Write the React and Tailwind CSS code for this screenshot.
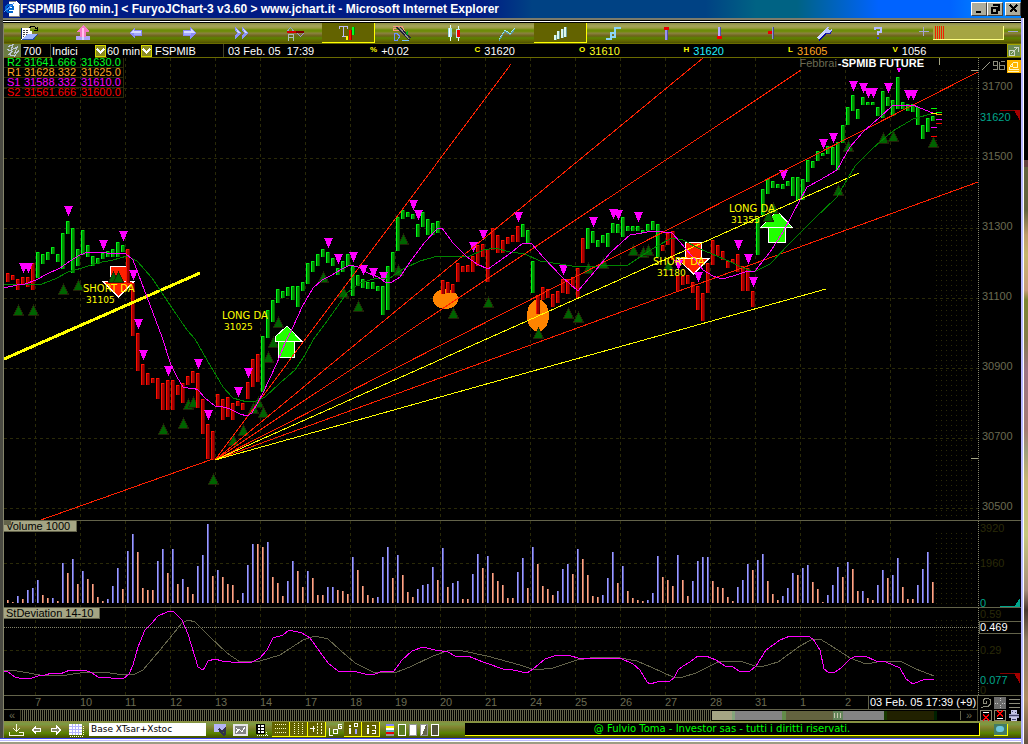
import React from "react";

/* ---------- market data: top-bottom and colour (g/r) in chart pixels, one bar each 5px ---------- */
const PRICE_BARS = `273-282r 275-280r 279-290r 277-284r 277-287r 263-290r 252-278g 254-264g 252-260g 247-254g 254-262g 233-269g 221-234g 228-273g 249-266g 230-255g 245-257g 256-266g 258-264g 253-259g 251-257g 249-257g 242-257g 245-252g
249-283r 283-336r 333-371r 364-385r 373-385r 378-383r 378-399r 383-410r 380-410r 380-410r 385-395r 383-403r 376-385r 371-383r 373-408r 399-434r 424-459r 431-460r 394-406r 399-420r 397-417r 403-420r 401-406r 403-410r 382-399r 359-387r 354-382r
336-392g 310-338g 300-322g 289-303g 291-298g 287-296g 286-300g 286-307g 282-291g 263-284g 261-272g 254-266g 249-257g 252-263g 258-266g 268-275g 261-272g 254-266g 266-296g 275-286g 279-288g 282-289g 282-289g 286-291g 286-315g 266-310g 252-272g 217-251g 210-219g 212-217g 214-219g 224-237g 212-227g 219-235g 223-235g 221-233g
280-294r 282-293r 284-293r 263-282r 266-272r 265-272r 256-272r 245-266r 244-257r 249-282r 228-250r 235-253r 240-253r 237-244r 235-242r 226-242r 224-237g 230-244g 261-293g 295-314r 287-300r 289-298r 294-307r 291-303r 279-293r 279-294r 277-287r 268-298r 238-263r
228-249g 231-243g 240-247g 235-243g 233-247g 223-233g 224-233g 217-237g 226-231g 226-231g 226-231g 230-233g 224-231g 221-230g 224-257g 245-251r 233-245r 231-260r 275-291r 276-285r 275-284r 282-293r 286-310r 293-321r 263-293r 240-265r 245-256r 251-260r 261-268r 259-263r 254-272r 266-291r 268-291r 291-307r
218-255g 189-215g 179-194g 181-188g 184-188g 184-189g 181-186g 177-196g 177-200g 179-200g 160-182g 161-168g 151-161g 153-156g 146-154g 147-165g 142-170g 125-143g 107-125g 95-111g 109-119g 97-105g 102-105g 102-105g 107-116g 91-118g 97-106g 100-116g 77-109g 102-109g 104-111g 104-112g 107-125g 125-139g 118-132g 116-121g`
  .split(/\s+/)
  .map((s) => {
    const [top, rest] = s.split("-");
    return { top: Number(top), bottom: parseInt(rest, 10), up: rest.endsWith("g") };
  });

const VOLUME_BARS = `3s 1s 7b 4s 13b 15b 23b 8s 5s 5b 2s 40b 30s 44b 19s 32b 24s 19s 6s 2s 4b 17b 35b 14s 52b 69b 51s 15s 13s 13s 42b 54b 30s 54b 19s 24b 16s 9s 37b 48b 79b 27s 33b 26s 19s 18s 3s 10b 38b 59b 59s 56s 61b 26s 20s 7s 22b 42b 32s 16s 32b 25s 8s 8s 16b 16b 13s
12s 9s 46b 33s 17s 8s 5s 6b 46b 56b 25s 48b 28s 11s 6s 14b 18b 19b 36b 23s 55b 16s 20b 22b 4s 4s 29b 49b 35s 47b 30s 22s 18s 5s 5s 31b 45b 15s 56b 39s 17s 14s 8s 12b 34b 39b 29s 54b 44s 28s 7s 6s 8b 25b 51b 20s 37b 12s 5s 3s 2s 3b 10b 47b 26s 23s 17s 48b 23s
7s 22b 42b 46b 46b 22s 16s 15s 6s 2s 16b 23b 39b 33s 43b 49b 22s 9s 3s 7b 15b 30b 28s 35b 38b 21s 14s 1s 8b 18b 36b 26s 41b 34s 12s 12b 5s 3s 18b 33b 25s 28b 45b 16s 4s 4s 18b 34b 51b 21s`
  .split(/\s+/)
  .map((s) => ({ h: parseInt(s, 10), blue: s.endsWith("b") }));

const FAST_MA =
  "4,288 17,285 25,284 36,280 47,274 60,268 70,261 80,255 88,252 107,253 125,253 133,260 147,297 153,313 162,337 171,365 177,377 183,387 188,388 193,388 198,390 205,398 215,406 220,406 230,409 240,414 247,416 252,413 263,393 277,363 285,343 293,327 302,307 313,288 322,280 330,276 342,269 350,265 358,267 368,273 378,277 385,282 392,282 400,277 410,262 425,242 437,229 442,228 453,243 467,257 477,264 488,269 498,262 512,252 523,243 532,244 543,257 562,277 578,291 590,277 610,253 622,242 630,235 642,233 653,231 672,233 680,242 697,262 703,270 713,276 722,279 733,276 748,271 755,271 770,252 783,232 800,200 807,187 820,180 837,170 850,147 863,132 880,117 892,106 913,105 925,110 933,113";
const SLOW_MA =
  "4,284 42,284 55,279 68,272 82,268 97,263 113,260 127,256 137,261 152,278 170,305 187,330 195,339 207,360 223,387 233,398 247,402 256,401 265,397 280,383 295,370 305,355 313,340 330,317 347,293 360,283 377,278 390,278 403,269 420,261 438,256 453,257 470,256 483,250 495,248 510,252 525,254 540,261 560,264 578,267 600,266 628,265 643,255 657,246 672,238 683,240 700,249 717,256 733,263 743,268 754,272 770,264 790,243 813,220 837,197 855,166 873,148 893,131 913,119 927,115 940,112";

/* Deviation curves are stored at three times the screen resolution, in blocks with their own origin. */
const curve = (blocks) =>
  blocks
    .flatMap(([ox, text]) =>
      text.split(" ").map((p) => {
        const [x, y] = p.split(",").map(Number);
        return `${ox + Math.round(x / 3)},${510 + Math.round(y / 3)}`;
      })
    )
    .join(" ");

const DEVIATION = curve([
  [0, "12,484 25,487 45,500 70,506 95,505 115,499 135,496 155,490 180,492 210,479 255,479 275,488 295,502 370,506 388,493 400,465 415,410 435,360 455,340 475,318 500,305 520,304 545,330 565,372 585,440 595,470 608,479 615,470 625,453 645,448 665,453 720,458 755,456 780,443 800,420 820,384 850,375 868,361 905,369 930,385 960,425 985,460 1015,482"],
  [340, "0,484 50,487 75,493 105,491 130,482 163,483 185,450 215,424 250,411 285,420 325,425 345,438 385,437 430,455 490,477 520,480 560,490 580,477 615,448 650,436 680,436 725,447 745,443 770,448 810,443 840,444 880,462 900,480 920,515 930,521 950,515 990,513 1003,505 1015,480"],
  [683, "0,468 20,455 45,437 70,437 100,450 125,467 150,472 168,484 200,484 220,468 250,420 290,390 320,377 375,379 390,388 410,420 423,478 435,485 455,485 475,475 500,448 520,439 545,439 580,453 610,457 650,475 670,508 690,522 710,513 730,508 752,508"],
]);
const DEVIATION_AVG = curve([
  [0, "12,479 50,484 120,494 180,499 240,489 310,487 350,493 400,496 430,480 480,420 545,338 565,331 585,335 630,380 680,430 720,456 780,454 840,435 910,390 945,378 985,387"],
  [340, "0,419 45,458 100,485 130,488 170,486 210,472 280,438 330,421 370,424 440,439 540,466 585,479 640,474 710,449 770,442 840,444 890,452 940,475 1000,500"],
  [683, "0,502 40,488 100,460 120,454 170,454 215,467 235,470 285,455 350,407 385,389 410,388 440,405 500,443 550,461 600,452 650,452 700,478 752,497"],
]);

const pairs = (s) => s.split(" ").map((p) => p.split(",").map(Number));
const DOWN_MARKS = pairs(
  "23,263 28,263 68,206 103,240 123,231 133,270 138,319 143,350 168,366 198,359 208,410 238,387 248,368 328,238 338,254 353,252 363,265 373,268 383,272 413,200 418,210 473,242 483,230 518,212 563,265 593,217 613,209 618,210 638,212 678,260 698,272 738,240 748,254 753,277 783,170 823,139 833,133 853,81 863,83 868,88 873,88 888,83 908,90 913,90"
);
const UP_MARKS = pairs(
  "18,305 33,305 63,284 78,280 113,272 118,272 163,424 183,418 188,399 193,397 213,474 233,435 243,425 253,403 258,397 263,407 268,352 273,337 278,317 323,272 343,287 358,301 398,265 403,234 453,308 488,297 538,328 568,308 578,312 588,263 603,258 633,245 643,247 648,245 668,260 838,185 848,141 883,133 893,131 933,137"
);
const FRONT_UP_MARKS = [[113, 272], [118, 272], [768, 211], [773, 203]];
const FAN = [
  [4, 533, 213, 459],
  [215, 460, 511, 64],
  [215, 460, 703, 58],
  [215, 460, 801, 70],
  [215, 460, 978, 72],
  [215, 460, 978, 182],
];
const SIGNALS = [
  [83, 292, "SHORT DA", 86, 303, "31105"],
  [222, 319, "LONG DA", 224, 330, "31025"],
  [653, 265, "SHORT DA", 657, 276, "31180"],
  [729, 212, "LONG DA", 731, 223, "31355"],
];
const GRID_X = Array.from({ length: 20 }, (_, i) => 35 + i * 45);
const FUTURE_X = Array.from({ length: 8 }, (_, i) => 936 + i * 5);
const TICKS = [
  [931, 108, "#00ff00"], [936, 112, "#00ff00"], [931, 113, "#ffff00"], [936, 114, "#ff9c00"],
  [936, 119, "#ff00ff"], [936, 123, "#ff0000"], [931, 127, "#ff00ff"], [931, 136, "#ff0000"],
];

function Grid({ top, bottom, rows }) {
  return (
    <g stroke="#2a2a08" strokeDasharray="3 3">
      {GRID_X.map((x) => (
        <line key={x} x1={x + 0.5} x2={x + 0.5} y1={top} y2={bottom} />
      ))}
      {rows.map((y) => (
        <line key={y} x1="4" x2="978" y1={y + 0.5} y2={y + 0.5} />
      ))}
      <g strokeDasharray="1 4">
        {FUTURE_X.map((x) => (
          <line key={x} x1={x + 0.5} x2={x + 0.5} y1={top + 12} y2={bottom} />
        ))}
      </g>
    </g>
  );
}

function AxisRule({ top, bottom }) {
  return <line x1="978.5" x2="978.5" y1={top} y2={bottom} stroke="#84846b" strokeDasharray="1 1" />;
}

function UpMark({ x, y }) {
  return <path d={`M${x + 0.5} ${y}L${x + 5.5} ${y + 10.5}H${x - 4.5}Z`} />;
}

function PricePanel() {
  return (
    <section className="relative flex border-b border-[#63634a]" aria-label="Price chart">
      <svg className="h-[462px] min-w-0 flex-1" viewBox="4 58 974 462" preserveAspectRatio="none" shapeRendering="crispEdges">
        <Grid top={58} bottom={520} rows={[88, 158, 228, 298, 368, 438, 508]} />
        <ellipse cx="445.5" cy="299" rx="12.5" ry="10" fill="#ff8400" />
        <ellipse cx="538" cy="315.5" rx="11" ry="16" fill="#ff8400" />
        <g fill="#006300" stroke="#212108">
          {UP_MARKS.map(([x, y]) => (
            <UpMark key={x} x={x} y={y} />
          ))}
        </g>
        <g stroke="#fff" fill="#ff2100">
          <path d="M110.500 266H126V281H134.500L118.500 297L102.500 281H110.500Z" />
          <path d="M102.500 281.500H134.500" />
          <path d="M685.500 242.500H701.500V258.500H709L693.500 274L677.500 258.500H685.500Z" />
          <path d="M677.500 258.500H709" />
        </g>
        <g stroke="#fff" fill="#21ff00">
          <path d="M287 326L302 341.500H294.500V357.500H278.500V341.500H275V337Z" />
          <path d="M275 341.500H302" />
          <path d="M777 211L792.500 227.500H785V242.500H768.500V227.500H760.500Z" />
          <path d="M760.500 227.500H792.500" />
        </g>
        {PRICE_BARS.map((b, i) => (
          <g key={i}>
            <rect x={6 + i * 5} y={b.top} width="4" height={b.bottom - b.top} fill={b.up ? "#009400" : "#a50000"} />
            <rect x={6 + i * 5} y={b.top} width="1" height={b.bottom - b.top} fill={b.up ? "#00ff21" : "#ff1000"} />
            <rect x={6 + i * 5} y={b.top} width="3" height="1" fill={b.up ? "#00e710" : "#ff1000"} />
            <rect x={9 + i * 5} y={b.top} width="1" height={b.bottom - b.top} fill={b.up ? "#006300" : "#6b0000"} />
          </g>
        ))}
        <g fill="#006300" stroke="#212108">
          {FRONT_UP_MARKS.map(([x, y]) => (
            <UpMark key={x} x={x} y={y} />
          ))}
        </g>
        <g fill="#ff00ff">
          {DOWN_MARKS.map(([x, y]) => (
            <path key={x} d={`M${x - 4} ${y}H${x + 5}L${x + 0.5} ${y + 10}Z`} />
          ))}
          <rect x="897" y="68" width="4" height="2" />
          <rect x="898" y="70" width="2" height="2" />
        </g>
        <g stroke="#ff2100">
          {FAN.map(([a, b, c, d], i) => (
            <line key={i} x1={a} y1={b} x2={c} y2={d} />
          ))}
        </g>
        <g stroke="#ffff00">
          <line x1="215" y1="460" x2="859" y2="173" />
          <line x1="215" y1="460" x2="826" y2="289" />
          <line x1="4" y1="359" x2="200" y2="273" strokeWidth="3" />
        </g>
        <polyline points={SLOW_MA} fill="none" stroke="#008400" />
        <polyline points={FAST_MA} fill="none" stroke="#ff00ff" />
        {TICKS.map(([x, y, c]) => (
          <rect key={y} x={x} y={y} width="6" height="1" fill={c} />
        ))}
        <g fill="#ffff00" fontFamily="DejaVu Sans, sans-serif" fontSize="10">
          {SIGNALS.map(([x1, y1, a, x2, y2, b]) => (
            <React.Fragment key={b}>
              <text x={x1} y={y1}>{a}</text>
              <text x={x2} y={y2} fontSize="9">{b}</text>
            </React.Fragment>
          ))}
        </g>
        <path d="M939.500 58V65M971 70.500H978M971 458.500H978" stroke="#a5a584" />
      </svg>
      <svg className="h-[462px] w-[43px] shrink-0" viewBox="978 58 43 462" shapeRendering="crispEdges">
        <AxisRule top={58} bottom={520} />
        <g fill="#6b6b52" fontFamily="Liberation Sans, sans-serif" fontSize="11">
          {[31700, 31500, 31300, 31100, 30900, 30700, 30500].map((v, i) => (
            <text key={v} x="982" y={90 + i * 70}>{v}</text>
          ))}
          <text x="980" y="121" fill="#00a58c">31620</text>
        </g>
        <path d="M1000 110.500H1016" stroke="#840000" />
        <path d="M1014 110H1020V121Z" fill="#a50000" />
        <path d="M982 70L990 62" stroke="#9c9c8c" />
        <path d="M993.500 61.500H997.500V65.500H993.500ZM1000.500 61.500H1004.500M999.500 62V69.500H1004.500V65.500H1000M997.500 65V69.500H993M1003 70L1005 68" stroke="#8c8c7b" fill="none" />
        <rect x="1007" y="60" width="14" height="13" fill="#ffb500" />
        <path d="M1009.500 66.500V69.500H1018.500M1009.500 66.500L1012.500 63.500V66.500H1009.500M1013 62.500H1017.500V67.500H1013M1008 71.500H1019" stroke="#fff7c6" fill="none" />
      </svg>
      <table className="absolute left-0 top-0 w-[120px] border-collapse text-[11px] leading-[9px]">
        <tbody>
          {[
            ["R2", "31641.666", "31630.0", "text-[#00ff21]"],
            ["R1", "31628.332", "31625.0", "text-[#ffa521]"],
            ["S1", "31588.332", "31610.0", "text-[#ff00ff]"],
            ["S2", "31561.666", "31600.0", "text-[#ff0000]"],
          ].map(([n, a, b, c]) => (
            <tr key={n} className={c}>
              <th scope="row" className="w-5 border-b border-[#2a2a08] p-0 pl-[3px] text-left font-normal">{n}</th>
              <td className="w-[57px] border-b border-[#2a2a08] p-0">{a}</td>
              <td className="border-b border-r border-[#2a2a08] p-0">{b}</td>
            </tr>
          ))}
        </tbody>
      </table>
      <h1 className="absolute right-[97px] top-0 flex text-[11px] font-bold leading-[11px] text-white">
        <span className="mr-px font-normal text-[#6b6b52]">Febbrai</span>
        <span>-SPMIB FUTURE</span>
      </h1>
    </section>
  );
}

function PanelLabel({ children }) {
  return (
    <h2 className="absolute left-0 top-0 border-b border-r border-[#63634a] bg-[#a5a584] px-[2px] pr-[6px] text-[11px] leading-[10px] text-black">
      {children}
    </h2>
  );
}

function VolumePanel() {
  return (
    <section className="relative flex border-b border-[#63634a]" aria-label="Volume chart">
      <svg className="h-[86px] min-w-0 flex-1" viewBox="4 521 974 86" preserveAspectRatio="none" shapeRendering="crispEdges">
        <Grid top={521} bottom={607} rows={[563]} />
        {VOLUME_BARS.map((b, i) => (
          <g key={i}>
            <rect x={7 + i * 5} y={603 - b.h} width="1" height={b.h} fill={b.blue ? "#9c9cff" : "#ffa584"} />
            <rect x={8 + i * 5} y={603 - b.h} width="1" height={b.h} fill={b.blue ? "#5a5ab5" : "#a56352"} />
          </g>
        ))}
      </svg>
      <svg className="h-[86px] w-[43px] shrink-0" viewBox="978 521 43 86" shapeRendering="crispEdges">
        <AxisRule top={521} bottom={607} />
        <g fill="#2a2a08" fontFamily="Liberation Sans, sans-serif" fontSize="11">
          <text x="980" y="532">3920</text>
          <text x="980" y="567">1960</text>
          <text x="980" y="607" fill="#00a58c">0</text>
        </g>
        <path d="M1000 606.500H1016" stroke="#00a58c" />
        <path d="M1020 598V607H1014Z" fill="#00a58c" />
      </svg>
      <PanelLabel>Volume 1000</PanelLabel>
      <span className="absolute left-0 top-0 h-[4px] w-[7px] bg-[#63634a]" />
    </section>
  );
}

function DeviationPanel() {
  return (
    <section className="relative flex border-b border-[#63634a]" aria-label="Standard deviation chart">
      <svg className="h-[87px] min-w-0 flex-1" viewBox="4 608 974 87" preserveAspectRatio="none" shapeRendering="crispEdges">
        <Grid top={608} bottom={695} rows={[650]} />
        <line x1="4" x2="978" y1="627.500" y2="627.500" stroke="#84846b" strokeDasharray="1 1" />
        <polyline points={DEVIATION_AVG} fill="none" stroke="#63634a" />
        <polyline points={DEVIATION} fill="none" stroke="#ff00ff" />
      </svg>
      <svg className="h-[87px] w-[43px] shrink-0" viewBox="978 608 43 87" shapeRendering="crispEdges">
        <AxisRule top={608} bottom={695} />
        <g fill="#2a2a08" fontFamily="Liberation Sans, sans-serif" fontSize="11">
          <text x="980" y="618">0.59</text>
          <text x="980" y="654">0.29</text>
          <text x="980" y="694">0</text>
          <rect x="979" y="621" width="43" height="12" fill="#000" stroke="#63634a" />
          <text x="980" y="631" fill="#fff">0.469</text>
          <text x="980" y="684" fill="#00a58c">0.077</text>
        </g>
        <path d="M1000 673.500H1016" stroke="#840000" />
        <path d="M1014 673H1020V684Z" fill="#a50000" />
      </svg>
      <PanelLabel>StDeviation 14-10</PanelLabel>
    </section>
  );
}

function Glyph({ children, className = "h-4 w-5", box = "0 0 20 16" }) {
  return (
    <svg className={className} viewBox={box} fill="none" shapeRendering="crispEdges" aria-hidden="true">
      {children}
    </svg>
  );
}

const TOOLS = [
  ["Open chart", <g key="i">
    <path d="M1 3H10V6H12V15H1Z" fill="#fff" />
    <path d="M1.500 14V3" stroke="#00216b" />
    <path d="M3 5.500H5M6 5.500H8M3 7.500H5M6 7.500H8M3 9.500H5M6 9.500H8M3 11.500H4" stroke="#42424a" />
    <path d="M2 15L7 9H18L13 15Z" fill="#9cb5ff" />
    <path d="M2 14.500H13M13 14.500L18 9" stroke="#214aa5" />
    <path d="M9.500 2.500L11.500 1.500H14.500L16.500 4M17.500 2V5.500H14" stroke="#000" />
  </g>],
  ["Up", <g key="i">
    <path d="M3 11H17V15H3Z" fill="#ada5f7" />
    <path d="M10 0L16 6V7H13V12H7V7H4V6Z" fill="#f77bc6" />
    <path d="M9 3H11V12H9Z" fill="#ffc6ef" />
    <path d="M9 12H11V15H9Z" fill="#d6d6ff" />
  </g>],
  ["Back", <g key="i"><path d="M3 8L9 2V5H16V11H9V14Z" fill="#8c8cf7" /><path d="M4 8L8 4V6H15V8Z" fill="#d6deff" /><path d="M8 8H15V10H8Z" fill="#a5adff" /></g>],
  ["Forward", <g key="i"><path d="M17 8L11 2V5H4V11H11V14Z" fill="#8c8cf7" /><path d="M16 8L12 4V6H5V8Z" fill="#d6deff" /><path d="M5 8H12V10H5Z" fill="#a5adff" /></g>],
  ["Fast forward", <g key="i"><path d="M3 2L10 8L3 14V10L5 8L3 6ZM10 2L17 8L10 14V10L12 8L10 6Z" fill="#8c94f7" /><path d="M4 4L8 8H6ZM11 4L15 8H13Z" fill="#d6deff" /></g>],
  ["Alarm", <g key="i">
    <path d="M2 6.500L5.500 2.500L9 6.500" stroke="#8ca5ce" />
    <path d="M2 6H11V8H2Z" fill="#d60000" />
    <path d="M11 6H19V8H11Z" fill="#7b0000" />
    <path d="M12 8L15.500 11.500L19 8" stroke="#9c94de" />
    <path d="M3.500 16V9.500H8.500V16M4 12.500H8" stroke="#adbdbd" />
  </g>],
  ["Trade marks", <g key="i">
    <path d="M1.500 4V1.500H9.500V4M5.500 2V11.500M4 11.500H8" stroke="#bdbdf7" />
    <path d="M8 11H10V15H8Z" fill="#ffff00" />
    <path d="M11 5H13V15H11Z" fill="#ff1000" /><path d="M13 5H14V15H13Z" fill="#940000" />
    <path d="M14 2H16V10H14Z" fill="#00ff21" /><path d="M16 2H17V10H16Z" fill="#008400" />
  </g>],
  ["Draw", <g key="i">
    <path d="M2 1.500H11.500L13 5.500H2.500V3.500H5" stroke="#f79484" />
    <path d="M3 8.500H6L8 10.500V12.500L6 15.500H3.500V8" stroke="#6b94ff" />
    <path d="M6 2L18 15M9 2L19 13" stroke="#21213a" strokeWidth="1.500" />
    <path d="M8 2L18 14" stroke="#949494" />
    <path d="M11 15.500H18" stroke="#7bc6ff" />
    <path d="M14 8L17 6V10Z" fill="#00b521" />
  </g>],
  ["Candles", <g key="i">
    <path d="M6 0V16M14 1V16" stroke="#e7ffff" />
    <path d="M4 3H8V12H4Z" fill="#9cdee7" /><path d="M5 3H6V12H5Z" fill="#fff" />
    <path d="M12 4H16V13H12Z" fill="#bde7ef" /><path d="M13 5H16V12H13Z" fill="#ef0000" />
  </g>],
  ["Line", <g key="i"><path d="M2 15L8 5L13 9L18 3" stroke="#a5efef" /><path d="M2 16L8 6L13 10L18 4" stroke="#5a9ca5" /></g>],
  ["Bars", <g key="i"><path d="M4 10H6V15H4ZM7 6H9V14H7ZM11 4H13V13H11ZM14 2H16V12H14Z" fill="#def7ef" /><path d="M6 10H7V15H6ZM9 6H10V14H9ZM13 4H14V13H13ZM16 2H17V12H16Z" fill="#6b9c94" /></g>],
  ["Steps", <g key="i"><path d="M3 14H7.500V8H12V12H9" stroke="#8cd6f7" strokeWidth="2" /><path d="M12 11V3H18" stroke="#8cd6f7" strokeWidth="2" /></g>],
  ["Mark top", <g key="i"><path d="M9 5H12V15H9Z" fill="#9c94ef" /><path d="M11 5H12V15H11Z" fill="#5252ad" /><path d="M8 2H13V5H8Z" fill="#e70000" /></g>],
  ["Mark bottom", <g key="i"><path d="M9 2H12V12H9Z" fill="#b5adff" /><path d="M11 2H12V11H11Z" fill="#5252ad" /><path d="M8 11H13V14H8Z" fill="#ef0000" /></g>],
  ["Mark price", <g key="i"><path d="M10 2H12V14H10Z" fill="#8c94ce" /><path d="M11 2H12V14H11Z" fill="#4a4a84" /><path d="M6 6H10V9H6Z" fill="#ef0000" /></g>],
  ["Settings", <g key="i">
    <path d="M3 14L11 6" stroke="#ced6ff" strokeWidth="3" />
    <path d="M4 15L13 7" stroke="#0808a5" strokeWidth="1.500" />
    <path d="M10 7V4L12 2H14L13 4L15 5L17 3V6L15 8H12Z" fill="#bdc6ff" />
    <path d="M11 8.500H15L17 6" stroke="#2121a5" />
  </g>],
  ["Help", <g key="i"><path d="M7 5V3H12.500V7H10V10" stroke="#b5bdff" strokeWidth="2" /><path d="M9 12H11V14H9Z" fill="#4242d6" /></g>],
];

function Toolbar() {
  return (
    <div role="toolbar" aria-label="Chart tools" className="flex h-[20px] bg-[linear-gradient(#8c8c42_0,#a5a55a_3px,#9c9c42_5px,#6b8c08_7px,#738c10_9px,#8c8442_10px,#6b6318_13px,#5a8400_15px,#636300_18px,#4a5200_20px)]">
      {TOOLS.map(([name, icon], i) => {
        const on = i === 6 || i === 10;
        return (
          <button
            key={name}
            type="button"
            aria-label={name}
            aria-pressed={on}
            className={`flex flex-1 items-center justify-center border-b border-r ${on ? "border-[#ffff00] bg-[#636300]" : "border-transparent"}`}
          >
            <Glyph>{icon}</Glyph>
          </button>
        );
      })}
      <div className="flex w-[116px] shrink-0 items-center gap-[3px] pl-[13px]">
        <button type="button" aria-label="More bars" className="flex">
          <Glyph className="h-4 w-3" box="0 0 12 16"><path d="M1 6.500H11M5.500 2V11" stroke="#a5a5d6" /></Glyph>
        </button>
        <input
          type="range"
          aria-label="Zoom"
          defaultValue="0"
          className="h-[14px] w-[71px] appearance-none border-b border-r border-[#ffff84] bg-[linear-gradient(90deg,#a5a542_0_1px,transparent_1px_12px,#a5a542_12px),repeating-linear-gradient(90deg,#ef2100_0,#ef2100_1px,#a5a542_1px,#a5a542_2px)] [&::-webkit-slider-thumb]:appearance-none"
        />
        <button type="button" aria-label="Fewer bars" className="flex">
          <Glyph className="h-4 w-3" box="0 0 12 16"><path d="M1 6.500H11" stroke="#a5a5d6" /></Glyph>
        </button>
      </div>
    </div>
  );
}

function Picker({ label, value, className }) {
  return (
    <div className={`flex items-center ${className}`}>
      <select aria-label={label} className="mt-px h-[13px] min-w-0 flex-1 appearance-none bg-black p-0 leading-[13px] text-white" defaultValue={value}>
        <option>{value}</option>
      </select>
      <Glyph className="pointer-events-none h-[12px] w-[11px] shrink-0 bg-[#8c8c21]" box="0 0 11 12">
        <path d="M0.500 0.500H10.500V11.500H0.500Z" stroke="#d6d600" />
        <path d="M2 4L5.500 7.500L9 4" stroke="#fff" strokeWidth="2" />
      </Glyph>
    </div>
  );
}

const QUOTES = [
  ["%", "+0.02", "text-white"],
  ["C", "31620", "text-white"],
  ["O", "31610", "text-[#ffff21]"],
  ["H", "31620", "text-[#21efff]"],
  ["L", "31605", "text-[#ffa521]"],
  ["V", "1056", "text-white"],
];

function QuoteRow() {
  return (
    <div className="flex h-[15px] items-stretch border-y border-[#6b6b00] bg-black text-[11px] leading-[13px] text-white">
      <button type="button" aria-label="Refresh" className="flex w-[17px] items-center justify-center bg-[#6b7b42]">
        <Glyph className="h-[13px] w-4"><path d="M4 3L10 1L8 7L15 4L12 12M3 7L9 9L5 13L12 15L17 8" stroke="#bdc6d6" strokeWidth="1.500" /></Glyph>
      </button>
      <span className="w-[29px] pl-[2px] pt-px">700</span>
      <Picker label="List" value="Indici" className="w-[56px] border-l border-[#42422a] pl-px" />
      <Picker label="Period" value="60 min" className="w-[46px] pl-px" />
      <span className="w-[71px] pl-[3px] pt-px">FSPMIB</span>
      <time className="w-[147px] whitespace-pre border-l border-[#42422a] pl-[4px] pt-px">03 Feb. 05  17:39</time>
      <dl className="grid flex-1 grid-cols-6">
        {QUOTES.map(([k, v, c]) => (
          <div key={k} className="flex gap-1">
            <dt className="text-[8px] font-bold leading-[12px] text-[#ffff00]">{k}</dt>
            <dd className={`pt-px ${c}`}>{v}</dd>
          </div>
        ))}
      </dl>
      <button type="button" aria-label="Detach" className="ml-[10px] flex w-[14px] items-center justify-center border border-[#a5a500] bg-[#6b8c52]">
        <Glyph className="h-3 w-3" box="0 0 12 12"><path d="M1.500 5.500H6.500V10.500H1.500ZM6 2.500H10.500V7M3 9L9 3" stroke="#ced6c6" /></Glyph>
      </button>
    </div>
  );
}

function TitleBar() {
  return (
    <header className="flex h-[18px] items-center bg-[linear-gradient(90deg,#001c84_0,#001c84_47%,#004284_52%,#004284_69%,#006384_74%,#006384_78%,#0063ff_86%,#0063ff_93%,#0084ff_97%)] pl-px">
      <Glyph className="h-4 w-4 shrink-0" box="0 0 16 16">
        <path d="M5 0H12L16 4V16H5Z" fill="#fff" />
        <path d="M5 0.500H12M15.500 4V15.500H5" stroke="#848484" />
        <path d="M2 8H9V6L7 4H4L2 6V9L4 11H9" stroke="#0063ce" strokeWidth="2" />
        <path d="M0 11L10 2" stroke="#4294ff" />
      </Glyph>
      <p className="flex-1 truncate font-['Liberation_Sans'] text-[12px] font-bold leading-[18px] text-white">
        FSPMIB [60 min.] &lt; FuryoJChart-3 v3.60 &gt; www.jchart.it - Microsoft Internet Explorer
      </p>
      {[
        ["Minimize", "M3 9H8", "M0 0"],
        ["Restore", "M4 2H10V7H8", "M3 5H8V10H3Z"],
        ["Close", "M3 2L10 9", "M10 2L3 9"],
      ].map(([name, a, b]) => (
        <button
          key={name}
          type="button"
          aria-label={name}
          className="flex h-[14px] w-4 items-center justify-center border border-b-[#424242] border-l-white border-r-[#424242] border-t-white bg-[#adad9c] last:ml-[2px]"
        >
          <Glyph className="h-3 w-[13px]" box="0 0 13 12">
            <path d={a} stroke="#000" strokeWidth="1.500" />
            <path d={b} stroke="#000" strokeWidth="1.500" />
          </Glyph>
        </button>
      ))}
    </header>
  );
}

function AxisRow() {
  const days = ["7", "10", "11", "12", "13", "14", "17", "18", "19", "20", "21", "24", "25", "26", "27", "28", "31", "1", "2"];
  return (
    <div className="flex h-[14px] text-[11px] leading-[13px]">
      <div className="flex min-w-0 flex-1 border-b border-[#63634a] pl-[31px]">
        <ol className="flex min-w-0 flex-1 overflow-hidden text-[#6b6b52]">
          {days.map((d) => (
            <li key={d} className="w-[45px] shrink-0">{d}</li>
          ))}
        </ol>
        <time className="w-[110px] shrink-0 whitespace-nowrap border-x border-[#63634a] pl-px text-white">03 Feb. 05 17:39 (+9)</time>
      </div>
      <div className="flex w-[43px] items-center gap-[2px] pl-[2px]">
        <button type="button" aria-label="Loop" className="flex">
          <Glyph className="h-3 w-3" box="0 0 12 12"><path d="M1 11L4 9.500H8L10.500 7V3L8 1.500H5L3.500 3V6.500H6.500V4" stroke="#8c8c7b" /></Glyph>
        </button>
        <button type="button" aria-label="Crosshair" className="flex bg-[#6b6b6b]">
          <Glyph className="h-3 w-3" box="0 0 12 12"><path d="M6.500 1V5M6.500 8V12M1 6.500H5M8 6.500H12" stroke="#c6c6c6" strokeDasharray="1 1" /></Glyph>
        </button>
        <button type="button" aria-label="Lines" className="flex">
          <Glyph className="h-3 w-3" box="0 0 12 12"><path d="M1 2.500H12M1 6.500H12M1 10.500H12" stroke="#8c8c7b" /></Glyph>
        </button>
      </div>
    </div>
  );
}

function ScrollRow() {
  return (
    <div className="flex h-[11px] text-[11px] leading-[9px] text-[#6b6b52]">
      <button type="button" aria-label="Scroll left" className="w-[17px] border-r border-[#42422a]">«</button>
      <div className="min-w-0 flex-1 bg-[repeating-linear-gradient(90deg,#000_0,#000_1px,#63634a_1px,#63634a_2px)]" />
      <div className="flex h-[9px] w-[172px] shrink-0 self-center bg-[linear-gradient(90deg,#a5a584_0_20px,#84a57b_20px_23px,#848484_23px_70px,#638c4a_70px_74px,#63633f_74px_121px,#63845a_121px_131px,#848484_131px)]">
        <span className="ml-[122px] h-[5px] w-[8px] self-center bg-[repeating-linear-gradient(90deg,#c6c6ad_0,#c6c6ad_1px,transparent_1px,transparent_3px)]" />
      </div>
      <div className="h-[9px] w-[77px] shrink-0 self-center border-r border-[#63634a] bg-[linear-gradient(90deg,#183900_0_3px,#212100_3px_50px,#002100_50px_53px,#000_53px)]" />
      <button type="button" aria-label="Scroll right" className="w-[17px] border-r border-[#42422a]">»</button>
      <div className="flex w-[43px] items-center gap-[2px] pl-[2px]">
        <button type="button" aria-label="Remove lower panel" className="flex">
          <Glyph className="h-[11px] w-3" box="0 0 12 11"><path d="M0.500 0.500H11.500V10.500H0.500Z" stroke="#84846b" /><path d="M3 3L5 2L7 3L9 2" stroke="#fff" /><path d="M3 5L9 10M9 5L3 10" stroke="#ff0000" strokeWidth="1.500" /></Glyph>
        </button>
        <button type="button" aria-label="Remove upper panel" className="flex">
          <Glyph className="h-[11px] w-3" box="0 0 12 11"><path d="M0.500 0.500H11.500V10.500H0.500Z" stroke="#84846b" /><path d="M3 9L5 8L7 9L9 8" stroke="#fff" /><path d="M3 1L9 6M9 1L3 6" stroke="#ff0000" strokeWidth="1.500" /></Glyph>
        </button>
        <button type="button" aria-label="Print" className="flex">
          <Glyph className="h-[11px] w-3" box="0 0 12 11"><path d="M3 0H9V4H3Z" fill="#c6c6e7" /><path d="M1 4H11V8H1Z" fill="#a5a5c6" /><path d="M3 7H9V11H3Z" fill="#c6c6e7" /><path d="M1 5.500H11M4 1.500H5M7 2.500H8M4 9.500H8" stroke="#42426b" /></Glyph>
        </button>
      </div>
    </div>
  );
}

const BOTTOM_LEFT = [
  ["Save", <path key="i" d="M8.500 1V8M5 5L8.500 8.500L12 5M1.500 9V12.500H15.500V9.500H11" stroke="#f7f7de" />, "w-[24px]"],
  ["Previous", <g key="i"><path d="M2 7L7 2V5H12V9H7V12Z" fill="#fff" /><path d="M4 7L6 5V6H11V8H6V9Z" fill="#84846b" /></g>, "w-[18px]"],
  ["Next", <g key="i"><path d="M14 7L9 2V5H4V9H9V12Z" fill="#fff" /><path d="M12 7L10 5V6H5V8H10V9Z" fill="#84846b" /></g>, "w-[18px]"],
  ["Table", <g key="i"><path d="M1 1H14V12H1Z" fill="#fff" /><path d="M1 3.500H14M1 6.500H14M1 9.500H14M4.500 1V12M7.500 1V12M10.500 1V12" stroke="#b5b5ff" /><path d="M2 13.500H16M15.500 3V13" stroke="#ffffc6" strokeDasharray="1 1" /></g>, "w-[24px]"],
];
const BOTTOM_MID = [
  ["Select area", <g key="i"><path d="M2 1H14V9H2Z" fill="#b5b5f7" /><path d="M7 6L10 9L13 6V12M8 8L13 13" stroke="#31314a" strokeWidth="1.500" /></g>, false],
  ["Snapshot", <g key="i"><path d="M0 1H15V13H0Z" fill="#e7e7e7" /><path d="M2 3H13V11H2Z" fill="#848484" /><path d="M3 10L6 6L9 9L12 4M3 5L6 8" stroke="#fff" /></g>, false],
  ["Film", <g key="i"><path d="M2 1H11V11H2Z" fill="#000" /><path d="M4 2.500H6M7 2.500H10M4 5.500H6M7 5.500H10M4 8.500H6M7 8.500H10" stroke="#fff" strokeWidth="2" /><path d="M3 12.500H14M12.500 9V13" stroke="#fff" strokeDasharray="1 1" /></g>, false],
  ["Horizontal grid", <path key="i" d="M2 2.500H14M2 6.500H14M2 10.500H14" stroke="#ffffc6" strokeDasharray="1 1" />, true],
  ["Vertical grid", <path key="i" d="M3.500 1V13M7.500 1V13M11.500 1V13" stroke="#ffffc6" strokeDasharray="1 1" />, true],
  ["Future grid", <g key="i"><path d="M1 6.500H6M4.500 4V9.500" stroke="#fff" strokeWidth="1.500" /><path d="M8.500 1V13M12.500 1V13" stroke="#ffffc6" strokeDasharray="2 1" /></g>, true],
  ["Log scale", <path key="i" d="M2.500 5V12.500H6M6.500 6.500H10.500V10.500H6.500ZM15 1.500H11.500V5.500H14.500V3.500H13" stroke="#fff" />, false],
  ["Info one", <g key="i"><path d="M4 3H6V5H4ZM4 6H6V12H4Z" fill="#fff" /><path d="M9.500 1.500H12.500V4.500H9.500Z" stroke="#fff" /><path d="M10 7H12V12H10Z" fill="#a5a5ff" /></g>, true],
  ["Info three", <g key="i"><path d="M4 3H6V5H4ZM4 6H6V12H4Z" fill="#fff" /><path d="M9 3.500H12.500V6.500M9 8.500H12.500V11.500H9" stroke="#fff" /></g>, true],
];

function BottomBar() {
  return (
    <footer className="flex h-[17px] items-stretch bg-[linear-gradient(#8c8c42_0,#7b9c42_3px,#848431_6px,#6b7b21_9px,#5a8400_12px,#424a00_17px)]">
      {BOTTOM_LEFT.map(([name, icon, w]) => (
        <button key={name} type="button" aria-label={name} className={`flex shrink-0 items-center justify-center ${w}`}>
          <Glyph className="h-[14px] w-4" box="0 0 16 14">{icon}</Glyph>
        </button>
      ))}
      <div className="flex w-[118px] shrink-0 items-center pl-px">
        <input
          aria-label="Template"
          defaultValue="Base XTsar+Xstoc"
          className="h-[13px] w-full bg-white px-[2px] font-['DejaVu_Sans'] text-[9px] leading-[13px] text-black outline-none"
        />
      </div>
      <div className="ml-[3px] flex shrink-0 items-stretch">
        {BOTTOM_MID.map(([name, icon, on], i) => (
          <button
            key={name}
            type="button"
            aria-label={name}
            aria-pressed={on}
            className={`flex items-center justify-center ${i < 3 ? "w-[21px]" : "w-[18px]"} ${on ? "my-px border-b border-r border-[#ffff00] bg-[#636300]" : ""}`}
          >
            <Glyph className="h-[14px] w-4 shrink-0" box="0 0 16 14">{icon}</Glyph>
          </button>
        ))}
      </div>
      <div className="ml-[6px] flex shrink-0 items-center gap-[3px]">
        <button type="button" aria-label="Colours" className="mr-px h-[12px] w-2 bg-[linear-gradient(#8484ff_0_2px,#ffff00_2px_4px,#fff_4px_6px,#5ab5bd_6px_8px,#e70000_8px_10px,#949494_10px)]" />
        <button type="button" aria-label="Outline" className="h-[12px] w-2 border border-white bg-[#5a7b21]" />
        <button type="button" aria-label="Filled" className="h-[12px] w-2 border border-[#949494] bg-white" />
        <button type="button" aria-label="Half filled" className="h-[12px] w-2 border border-[#949494] bg-[linear-gradient(110deg,#fff_50%,#63634a_50%)]" />
        <button type="button" aria-label="Dark" className="h-[12px] w-2 border border-white bg-[#52523a]" />
      </div>
      <p className="my-[2px] ml-[26px] min-w-0 flex-1 truncate border-b border-r border-[#ffff00] bg-black text-center font-['DejaVu_Sans'] text-[10px] leading-[12px] text-[#00ff00]">
        @ Fulvio Toma - Investor sas - tutti i diritti riservati.
      </p>
      <div className="flex w-[41px] shrink-0 items-center justify-center">
        <button type="button" aria-label="Connection" className="flex h-[12px] w-[14px] items-center justify-center border-b border-r border-[#ffff00] bg-[#427b63]">
          <span className="h-[6px] w-[8px] rounded-full bg-[#6bc6de]" />
        </button>
      </div>
    </footer>
  );
}

export default function App() {
  return (
    <div className="flex overflow-hidden bg-black font-['Liberation_Sans',Arial,sans-serif]">
      <main className="min-w-0 flex-1">
        <div className="flex border-l-[3px] border-[#4a4a42]">
          <div className="min-w-0 flex-1">
            <TitleBar />
            <div className="h-[5px] bg-[linear-gradient(#7b7b6b_0_2px,#000_2px_3px,#fff_3px_4px,#000_4px)]" />
            <div className="border-l border-[#84846b]">
              <Toolbar />
              <QuoteRow />
              <PricePanel />
              <VolumePanel />
              <DeviationPanel />
              <AxisRow />
              <ScrollRow />
              <BottomBar />
            </div>
          </div>
        </div>
        <div className="h-[6px] bg-[linear-gradient(#3942ef_0_1px,#fff_1px_2px,#bdbdff_2px_3px,#fff_3px_4px,#9c9c84_4px)]" />
      </main>
      <div className="mt-[18px] w-[3px] shrink-0 bg-[linear-gradient(90deg,#b5b5ff_0_2px,#fff_2px)]" />
      <div className="w-[4px] shrink-0 bg-[linear-gradient(#000_0_160px,#634242_160px_167px,#63633f_167px_210px,#bd9c6b_235px,#c6b56b_255px,#c69c7b_290px,#7b8431_300px,#847b4a_340px,#9c7384_370px,#a57b73_430px,#9c9c7b_450px,#c6b573_480px,#c6c67b_535px,#a58c7b_590px,#4a3931_610px,#8c7b63_640px,#ad8c63_700px,#635242_744px)]" />
    </div>
  );
}
